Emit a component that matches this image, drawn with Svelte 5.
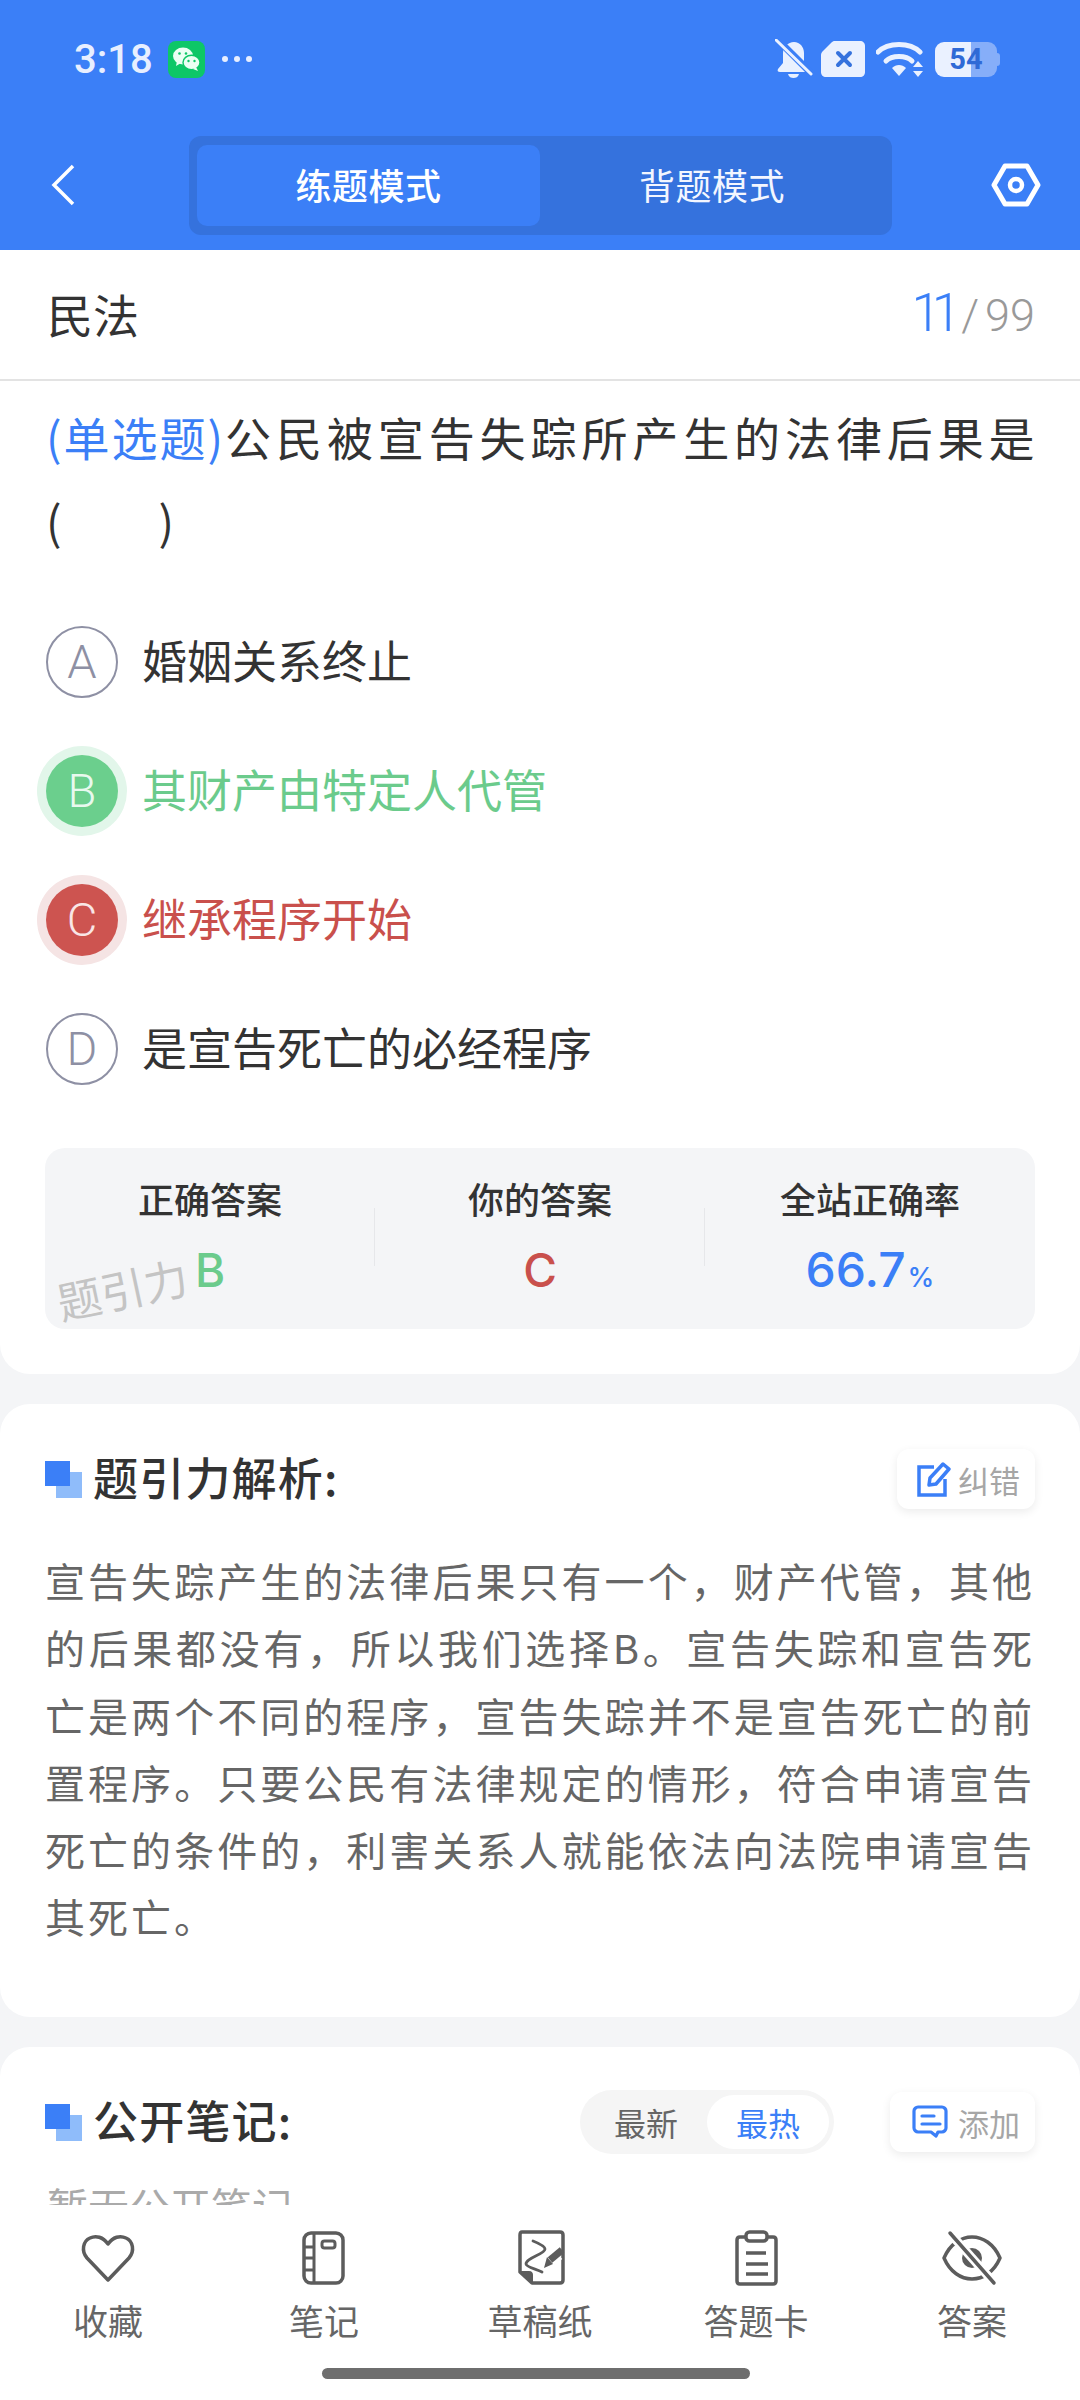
<script>
  const options = [
    { key: 'A', text: '婚姻关系终止', state: '' },
    { key: 'B', text: '其财产由特定人代管', state: 'right' },
    { key: 'C', text: '继承程序开始', state: 'wrong' },
    { key: 'D', text: '是宣告死亡的必经程序', state: '' }
  ];
  const analysis =
    '宣告失踪产生的法律后果只有一个，财产代管，其他的后果都没有，所以我们选择B。宣告失踪和宣告死亡是两个不同的程序，宣告失踪并不是宣告死亡的前置程序。只要公民有法律规定的情形，符合申请宣告死亡的条件的，利害关系人就能依法向法院申请宣告其死亡。';
</script>

<div class="page">
  <header class="top">
    <div class="status">
      <span class="time">3:18</span>
      <svg class="wechat" width="37" height="37" viewBox="0 0 37 37">
        <rect width="37" height="37" rx="8" fill="#0dc767" />
        <ellipse cx="15" cy="15" rx="10" ry="8.5" fill="#eafff3" />
        <path d="M9 20l-1 5 5-3z" fill="#eafff3" />
        <ellipse cx="23.5" cy="21.5" rx="8.5" ry="7.2" fill="#eafff3" stroke="#0dc767" stroke-width="1.4" />
        <path d="M28 26l2 4-5-2z" fill="#eafff3" />
        <circle cx="11.5" cy="12.5" r="1.3" fill="#0dc767" /><circle cx="18" cy="12.5" r="1.3" fill="#0dc767" />
        <circle cx="20.5" cy="20" r="1.2" fill="#0dc767" /><circle cx="26.5" cy="20" r="1.2" fill="#0dc767" />
      </svg>
      <span class="dots"><i></i><i></i><i></i></span>
      <span class="spacer"></span>
      <svg width="38" height="40" viewBox="0 0 38 40">
        <path d="M19 3c6 0 10 5 10 11v9l5 7c1 2 0 3-2 3H5c-2 0-3-1-2-3l5-6V14c0-6 5-11 11-11z" fill="#eaf1ff" />
        <path d="M13 35h11c-1 3-3 4-5.500 4S14 38 13 35z" fill="#eaf1ff" />
        <path d="M2 0l36 36" stroke="#3b7ff7" stroke-width="7" />
        <path d="M1 1l35 34" stroke="#eaf1ff" stroke-width="3" stroke-linecap="round" />
      </svg>
      <svg class="sim" width="44" height="36" viewBox="0 0 44 36">
        <path d="M13 0h26c3 0 5 2 5 5v26c0 3-2 5-5 5H5c-3 0-5-2-5-5V14c0-2 1-3 2-4l8-8c1-1 2-2 3-2z" fill="#eaf1ff" />
        <path d="M17 12l12 12M29 12L17 24" stroke="#3572dd" stroke-width="4" stroke-linecap="round" />
      </svg>
      <svg class="wifi" width="48" height="36" viewBox="0 0 48 36">
        <path d="M2 11C12 1 34 1 44 11" fill="none" stroke="#eaf1ff" stroke-width="5" stroke-linecap="round" />
        <path d="M10 20c6-6 20-6 26 0" fill="none" stroke="#eaf1ff" stroke-width="5" stroke-linecap="round" />
        <path d="M16 27c4-4 10-4 14 0l-7 8z" fill="#eaf1ff" />
        <path d="M42 20l5 6H37zM42 36l5-6H37z" fill="#eaf1ff" />
      </svg>
      <span class="battery"><span class="level">54</span><i class="nub"></i></span>
    </div>
    <nav class="bar">
      <svg class="back" width="24" height="42" viewBox="0 0 24 42">
        <path d="M22 2L3 21l19 19" fill="none" stroke="#fff" stroke-width="3.500" />
      </svg>
      <div class="tabs">
        <span class="tab on">练题模式</span>
        <span class="tab">背题模式</span>
      </div>
      <svg class="gear" width="50" height="44" viewBox="0 0 50 44">
        <path d="M14 3h22l11 19-11 19H14L3 22z" fill="none" stroke="#fff" stroke-width="5" stroke-linejoin="round" />
        <circle cx="25" cy="22" r="6" fill="none" stroke="#fff" stroke-width="4.500" />
      </svg>
    </nav>
  </header>

  <main class="scroll">
    <section class="card first">
      <div class="subject">
        <span>民法</span>
        <span class="count"><b>11</b><em>/</em>99</span>
      </div>
      <div class="question">
        <p><span class="kind">(单选题)</span>公民被宣告失踪所产生的法律后果是<br />(<span class="gap"></span>)</p>
      </div>
      <ul class="options">
        {#each options as o}
          <li class={o.state}>
            <span class="badge">{o.key}</span>
            <span class="text">{o.text}</span>
          </li>
        {/each}
      </ul>
      <div class="stats">
        <div class="stat">
          <span class="label">正确答案</span>
          <span class="value green">B</span>
        </div>
        <div class="stat">
          <span class="label">你的答案</span>
          <span class="value red">C</span>
        </div>
        <div class="stat">
          <span class="label">全站正确率</span>
          <span class="value blue">66.7<small>%</small></span>
        </div>
        <span class="mark">题引力</span>
      </div>
    </section>

    <section class="card second">
      <div class="head">
        <span class="square"></span>
        <h2>题引力解析:</h2>
        <span class="spacer"></span>
        <span class="action">
          <svg width="34" height="36" viewBox="0 0 34 36">
            <path d="M17 6H2v28h26V18" fill="none" stroke="#3b7ff7" stroke-width="3.500" />
            <path d="M12 24l1-7L26 3l6 5-13 15z" fill="none" stroke="#3b7ff7" stroke-width="3.500" stroke-linejoin="round" />
          </svg>
          纠错
        </span>
      </div>
      <p class="analysis">{analysis}</p>
    </section>

    <section class="card third">
      <div class="head">
        <span class="square"></span>
        <h2>公开笔记:</h2>
        <span class="spacer"></span>
        <div class="seg">
          <span>最新</span>
          <span class="on">最热</span>
        </div>
        <span class="action add">
          <svg width="36" height="34" viewBox="0 0 36 34">
            <path d="M6 2h24c2 0 4 2 4 4v17c0 2-2 4-4 4h-4l-2 4-5-4H6c-2 0-4-2-4-4V6c0-2 2-4 4-4z" fill="none" stroke="#3b7ff7" stroke-width="3.200" stroke-linejoin="round" />
            <path d="M10 11h12M10 19h18" stroke="#3b7ff7" stroke-width="3.200" stroke-linecap="round" />
          </svg>
          添加
        </span>
      </div>
      <p class="empty">暂无公开笔记</p>
    </section>
  </main>

  <footer class="dock">
    <div class="item">
      <svg width="64" height="56" viewBox="0 0 64 56">
        <path d="M32 50L11 28C5 21 7 11 14 8c6-3 13-1 18 6 5-7 12-9 18-6 7 3 9 13 3 20z" fill="none" stroke="#5c5c5c" stroke-width="3.500" stroke-linejoin="round" />
      </svg>
      <span>收藏</span>
    </div>
    <div class="item">
      <svg width="64" height="56" viewBox="0 0 64 56">
        <rect x="12" y="3" width="39" height="50" rx="7" fill="none" stroke="#5c5c5c" stroke-width="3.500" />
        <path d="M22 3v50M12 17h10M12 28h10M12 40h10" stroke="#5c5c5c" stroke-width="3" />
        <rect x="30" y="11" width="13" height="7" rx="2.500" fill="none" stroke="#5c5c5c" stroke-width="3" />
      </svg>
      <span>笔记</span>
    </div>
    <div class="item">
      <svg width="64" height="56" viewBox="0 0 64 56">
        <path d="M14 2h38c2 0 3 1 3 3v45c0 2-1 3-3 3H24L12 42V5c0-2 1-3 2-3z" fill="none" stroke="#5c5c5c" stroke-width="3.500" stroke-linejoin="round" />
        <path d="M12 41h9c3 0 4 2 4 4v8z" fill="#5c5c5c" />
        <path d="M25 11c5 2 12 5 12 8 0 5-19 9-19 15 0 3 10 5 16 8" fill="none" stroke="#5c5c5c" stroke-width="2.800" stroke-linecap="round" />
        <path d="M36 36l14-12" stroke="#fff" stroke-width="13" />
        <path d="M42 30l12-10" stroke="#5c5c5c" stroke-width="7" />
        <path d="M39 27l6 7-9 4z" fill="#5c5c5c" />
      </svg>
      <span>草稿纸</span>
    </div>
    <div class="item">
      <svg width="64" height="56" viewBox="0 0 64 56">
        <path d="M21 7h-5c-2 0-3 1-3 3v41c0 2 1 3 3 3h33c2 0 3-1 3-3V10c0-2-1-3-3-3h-5" fill="none" stroke="#5c5c5c" stroke-width="3.500" />
        <rect x="22" y="2" width="21" height="9" rx="3.500" fill="none" stroke="#5c5c5c" stroke-width="3.500" />
        <path d="M22 23h20M22 34h22M22 44h22" stroke="#5c5c5c" stroke-width="3.500" />
      </svg>
      <span>答题卡</span>
    </div>
    <div class="item">
      <svg width="64" height="56" viewBox="0 0 64 56">
        <path d="M4 28C10 14 21 7 32 7s22 7 28 21C54 42 43 49 32 49S10 42 4 28z" fill="none" stroke="#5c5c5c" stroke-width="3.500" stroke-linejoin="round" />
        <circle cx="32" cy="28" r="10" fill="#5c5c5c" />
        <path d="M8 1l48 54" stroke="#fff" stroke-width="9" />
        <path d="M10 3l44 50" stroke="#5c5c5c" stroke-width="3.500" stroke-linecap="round" />
      </svg>
      <span>答案</span>
    </div>
    <div class="home"></div>
  </footer>
</div>

<style>
  :global(body) {
    margin: 0;
    background: #f4f5f7;
  }

  .page {
    width: 1080px;
    height: 2400px;
    display: flex;
    flex-direction: column;
    overflow: hidden;
    font-family: "Noto Sans CJK SC", "Noto Sans", sans-serif;
    color: #333;
  }

  .spacer { flex: 1; }

  .top {
    height: 250px;
    flex: none;
    background: #3b7ff7;
    box-sizing: border-box;
  }

  .status {
    height: 118px;
    padding: 0 83px 0 74px;
    box-sizing: border-box;
    display: flex;
    align-items: center;
    color: #e8efff;
  }
  .time {
    font-family: Roboto, sans-serif;
    font-size: 40px;
    font-weight: 500;
    width: 94px;
  }
  .dots {
    display: flex;
    gap: 6px;
    margin-left: 17px;
  }
  .dots i {
    width: 6px;
    height: 6px;
    border-radius: 50%;
    background: #e8efff;
  }
  .sim { margin-left: 8px; }
  .wifi { margin-left: 11px; }
  .battery {
    margin-left: 11px;
    position: relative;
    width: 62px;
    height: 35px;
  }
  .level {
    display: block;
    width: 62px;
    height: 35px;
    border-radius: 9px;
    background: linear-gradient(90deg, #eaf1ff 58%, #86aef9 58%);
    color: #2f6ad6;
    font-family: Roboto, sans-serif;
    font-size: 29px;
    font-weight: 700;
    line-height: 35px;
    text-align: center;
  }
  .nub {
    position: absolute;
    right: -3px;
    top: 11px;
    width: 3px;
    height: 13px;
    background: #86aef9;
    border-radius: 0 3px 3px 0;
  }

  .bar {
    height: 100px;
    margin-top: 17px;
    padding: 0 39px 0 51px;
    display: flex;
    align-items: center;
  }
  .tabs {
    width: 703px;
    height: 99px;
    margin-left: 114px;
    box-sizing: border-box;
    padding: 9px 8px;
    background: #3572dd;
    border-radius: 12px;
    display: flex;
  }
  .gear { margin-left: auto; }
  .tab {
    flex: 1;
    height: 81px;
    box-sizing: border-box;
    padding-bottom: 3px;
    border-radius: 10px;
    color: #f3f6ff;
    font-size: 36px;
    line-height: 78px;
    text-align: center;
    letter-spacing: 0.500px;
  }
  .tab.on {
    flex: none;
    width: 343px;
    background: #3b7ff7;
    color: #fff;
    font-weight: 500;
  }

  .scroll {
    flex: 1;
    min-height: 0;
    overflow: hidden;
    display: flex;
    flex-direction: column;
    gap: 30px;
  }
  .card {
    background: #fff;
    flex: none;
    border-radius: 30px;
  }
  .first {
    height: 1124px;
    border-radius: 0 0 30px 30px;
  }
  .subject {
    height: 131px;
    box-sizing: border-box;
    padding: 0 45px 4px 47px;
    border-bottom: 2px solid #e3e3e3;
    display: flex;
    align-items: center;
    justify-content: space-between;
    font-size: 46px;
  }
  .count {
    font-family: Roboto, sans-serif;
    font-weight: 300;
    font-size: 45px;
    color: #999;
  }
  .count b {
    font-weight: 300;
    font-size: 53px;
    letter-spacing: -9px;
    color: #3b7ff7;
  }
  .count em {
    font-style: normal;
    margin: 0 6px 0 9px;
  }
  .question {
    padding: 13px 30px 0 46px;
  }
  .question p {
    margin: 0;
    font-size: 46px;
    line-height: 84px;
    letter-spacing: 4.900px;
    white-space: nowrap;
  }
  .kind {
    color: #3b7ff7;
    letter-spacing: 2px;
  }
  .gap {
    display: inline-block;
    width: 92px;
  }

  .options {
    list-style: none;
    margin: 35px 0 0;
    padding: 0 0 0 46px;
  }
  .options li {
    height: 129px;
    display: flex;
    align-items: center;
    gap: 24px;
    font-size: 45px;
  }
  .text { padding-bottom: 5px; }
  .badge {
    width: 72px;
    height: 72px;
    box-sizing: border-box;
    border: 2px solid #8e90a4;
    border-radius: 50%;
    display: flex;
    align-items: center;
    justify-content: center;
    font-family: Roboto, sans-serif;
    font-size: 47px;
    font-weight: 300;
    color: #8e90a4;
  }
  .right { color: #6bcb8c; }
  .right .badge {
    background: #6bcf8d;
    border: 0;
    color: #e8f9ee;
    box-shadow: 0 0 0 9px #e2f6ea;
  }
  .wrong { color: #c9504c; }
  .wrong .badge {
    background: #cd5450;
    border: 0;
    color: #f9e6e6;
    box-shadow: 0 0 0 9px #f5e4e4;
  }

  .stats {
    position: relative;
    margin: 35px 45px 0;
    height: 181px;
    background: #f4f5f7;
    border-radius: 20px;
    display: grid;
    grid-template-columns: repeat(3, 1fr);
  }
  .stat {
    display: flex;
    flex-direction: column;
    align-items: center;
    padding-top: 26px;
    position: relative;
  }
  .stat + .stat::before {
    content: "";
    position: absolute;
    left: -1px;
    top: 60px;
    height: 58px;
    width: 1px;
    background: #e6e7ea;
  }
  .label {
    font-size: 36px;
    font-weight: 500;
    line-height: 48px;
  }
  .value {
    margin-top: 23px;
    font-family: Inter, sans-serif;
    font-size: 46px;
    font-weight: 500;
    line-height: 50px;
  }
  .value.blue { font-size: 48px; }
  .value small {
    font-size: 27px;
    margin-left: 2px;
  }
  .green { color: #6bcb8c; }
  .red { color: #c9504c; }
  .blue { color: #3b7ff7; }
  .mark {
    position: absolute;
    left: 11px;
    top: 115px;
    font-size: 44px;
    line-height: 50px;
    color: #c4c4c4;
    transform: rotate(-12deg);
  }

  .second {
    height: 613px;
    padding: 45px 45px 0;
    box-sizing: border-box;
  }
  .third {
    padding: 45px 45px 0;
    box-sizing: border-box;
  }
  .head {
    height: 60px;
    display: flex;
    align-items: center;
  }
  .square {
    position: relative;
    width: 37px;
    height: 37px;
    margin-right: 11px;
    background: linear-gradient(#8fbcfa, #8fbcfa) 11px 11px / 26px 26px no-repeat;
    flex: none;
  }
  .square::before {
    content: "";
    position: absolute;
    left: 0;
    top: 0;
    width: 25px;
    height: 25px;
    background: #3b7ff7;
  }
  h2 {
    margin: 0 0 5px;
    font-size: 45px;
    font-weight: 500;
    letter-spacing: 1.200px;
    line-height: 60px;
    color: #333;
    white-space: nowrap;
  }
  .action {
    width: 138px;
    height: 60px;
    box-sizing: border-box;
    padding-left: 20px;
    display: flex;
    align-items: center;
    gap: 7px;
    border-radius: 12px;
    background: #fff;
    box-shadow: 0 3px 10px rgba(0, 0, 0, 0.08);
    color: #a6a6a6;
    font-size: 31px;
    white-space: nowrap;
  }
  .analysis {
    margin: 38px 0 0;
    font-size: 40px;
    line-height: 67.300px;
    letter-spacing: 3px;
    color: #666;
    text-align: justify;
  }

  .seg {
    width: 254px;
    height: 64px;
    box-sizing: border-box;
    padding: 5px;
    background: #f5f5f5;
    border-radius: 32px;
    display: flex;
    align-items: center;
    font-size: 32px;
    color: #666;
  }
  .seg span {
    flex: 1;
    height: 54px;
    line-height: 54px;
    text-align: center;
    border-radius: 27px;
  }
  .seg .on {
    flex: none;
    width: 122px;
    background: #fff;
    color: #3b7ff7;
  }
  .add {
    margin-left: 56px;
    width: 145px;
    padding-left: 22px;
    gap: 10px;
  }
  .empty {
    margin: 25px 0 0 2px;
    font-size: 41px;
    line-height: 56px;
    color: #aaa;
  }

  .dock {
    height: 195px;
    flex: none;
    background: #fff;
    position: relative;
    display: grid;
    grid-template-columns: repeat(5, 1fr);
    align-items: start;
    padding-top: 25px;
    box-sizing: border-box;
  }
  .item {
    display: flex;
    flex-direction: column;
    align-items: center;
    color: #666;
    font-size: 35px;
    line-height: 46px;
    gap: 11px;
  }
  .home {
    position: absolute;
    left: 322px;
    bottom: 21px;
    width: 428px;
    height: 11px;
    border-radius: 6px;
    background: #6e6e6e;
  }
</style>
